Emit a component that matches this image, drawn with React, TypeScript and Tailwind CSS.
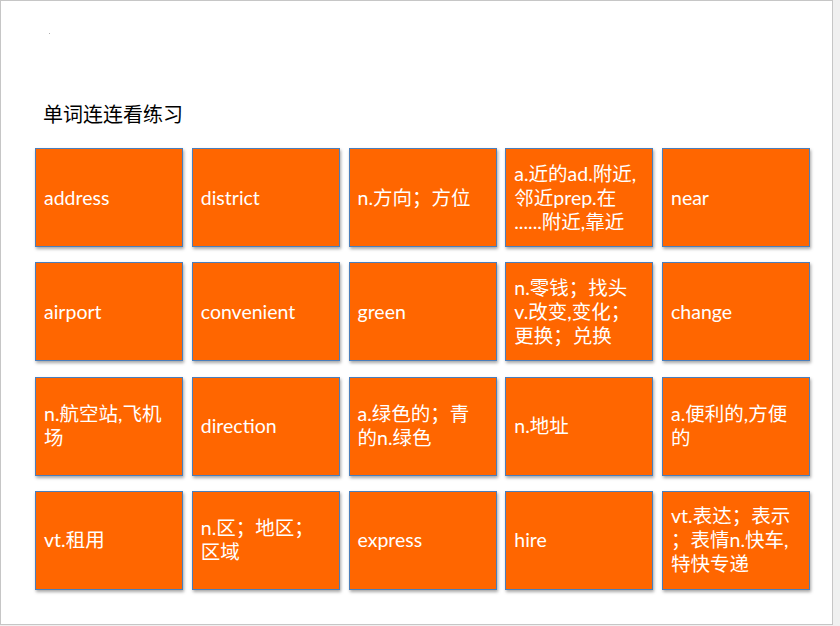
const cells: string[][] = [
  ["address"],
  ["district"],
  ["n.方向；方位"],
  ["a.近的ad.附近,", "邻近prep.在", "......附近,靠近"],
  ["near"],
  ["airport"],
  ["convenient"],
  ["green"],
  ["n.零钱；找头", "v.改变,变化；", "更换；兑换"],
  ["change"],
  ["n.航空站,飞机", "场"],
  ["direction"],
  ["a.绿色的；青", "的n.绿色"],
  ["n.地址"],
  ["a.便利的,方便", "的"],
  ["vt.租用"],
  ["n.区；地区；", "区域"],
  ["express"],
  ["hire"],
  ["vt.表达；表示", "；表情n.快车,", "特快专递"],
];

const WordCell = ({ lines }: { lines: string[] }) => {
  return (
    <div className="h-[99px] w-[148px] flex flex-col justify-center bg-[#ff6600] border border-[#4a7ebb] pl-[8px] text-white text-[19.5px] leading-[24px] shadow-[1px_2px_3px_rgba(0,0,0,0.35)]">
      {lines.map((line, i) => (
        <div key={i} className="whitespace-nowrap">
          {line}
        </div>
      ))}
    </div>
  );
};

export default function App() {
  return (
    <div className="w-[840px] h-[626px] bg-[#f0f0f0] font-['Lato','Noto_Sans_CJK_SC',sans-serif]">
      <div className="w-[833px] h-[625px] bg-white border border-[#c6c6c6] flex flex-col">
        <div className="ml-[48px] mt-[32px] w-px h-px bg-[#b0b0b0]" />
        <h1 className="ml-[42px] mt-[66px] text-[20px] leading-[28px] text-black font-normal font-['Noto_Sans_CJK_SC',sans-serif]">
          单词连连看练习
        </h1>
        <div className="ml-[34px] mt-[20px] grid grid-cols-[repeat(5,148px)] gap-x-[8.75px] gap-y-[15.3px]">
          {cells.map((lines, i) => (
            <WordCell key={i} lines={lines} />
          ))}
        </div>
      </div>
    </div>
  );
}
